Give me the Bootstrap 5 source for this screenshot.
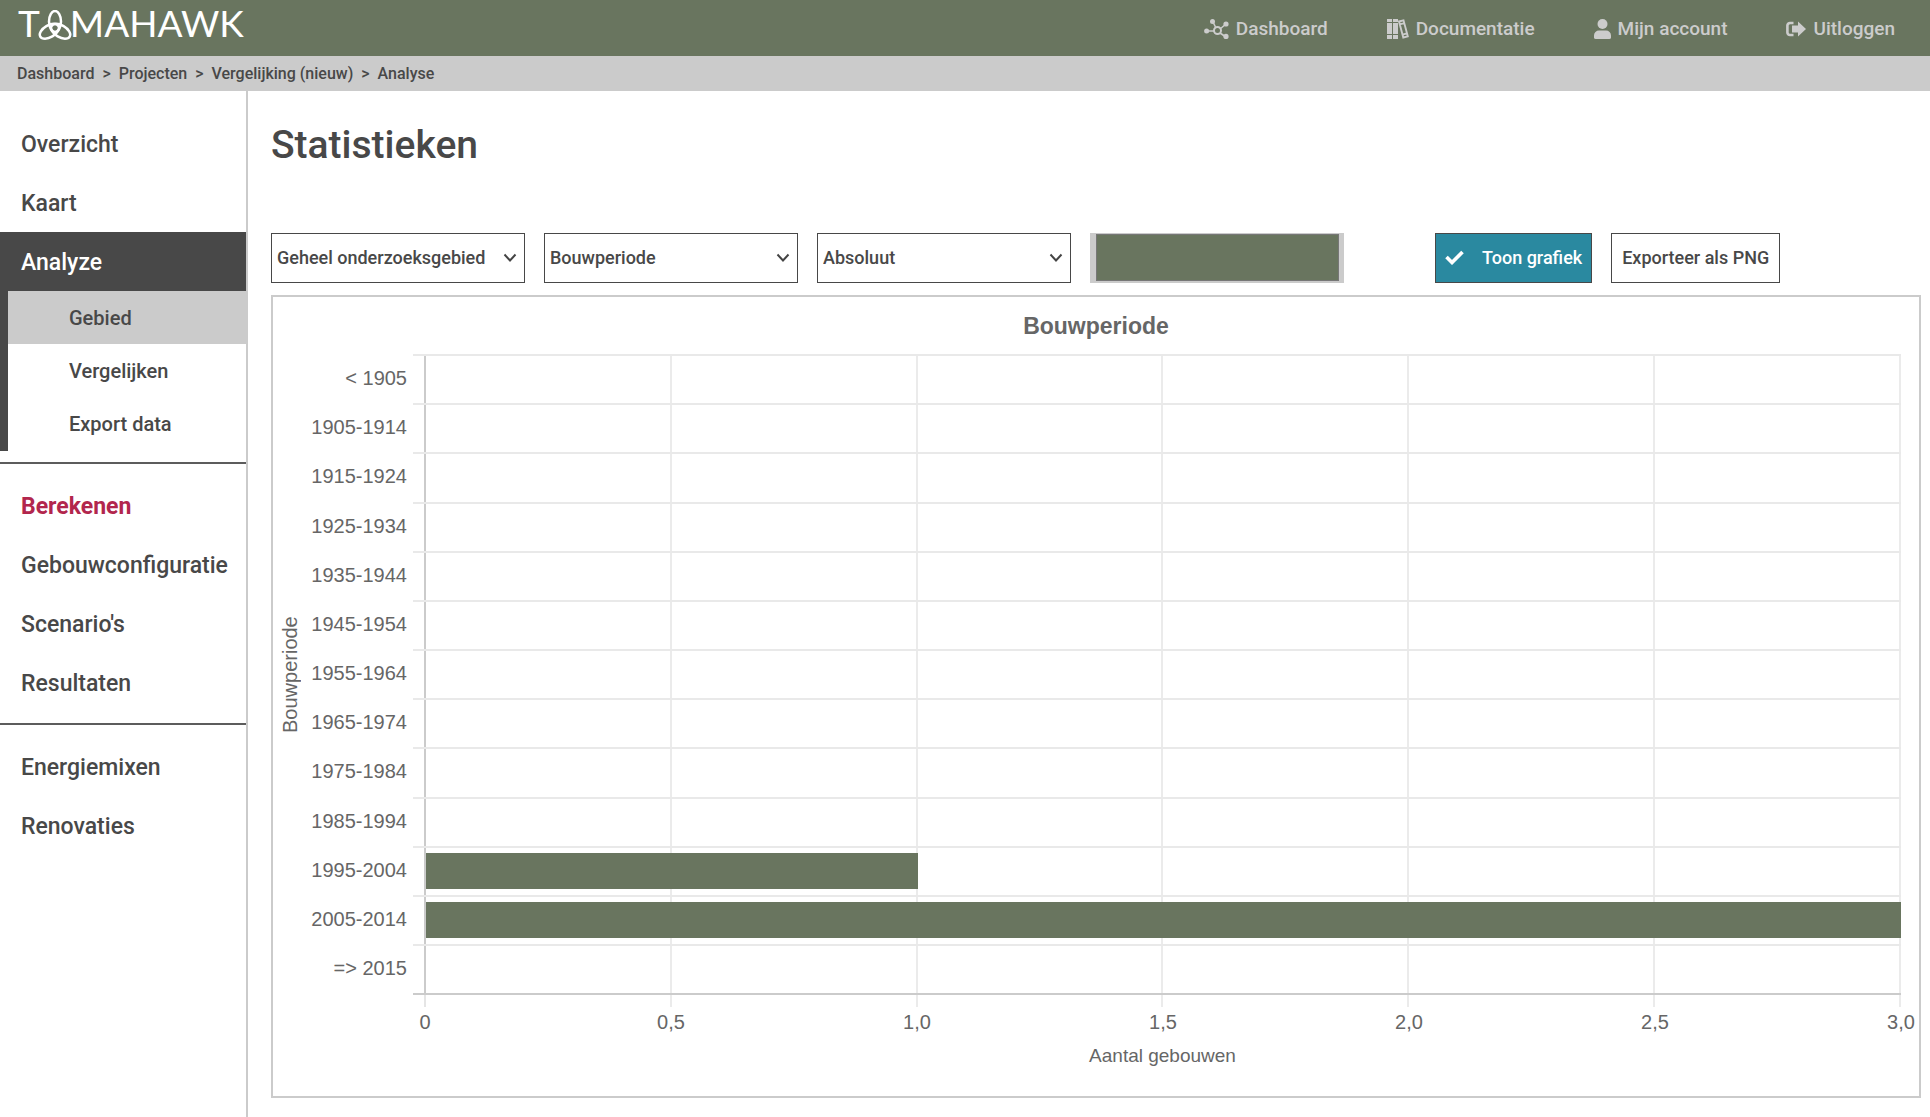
<!DOCTYPE html>
<html lang="nl">
<head>
<meta charset="utf-8">
<meta name="viewport" content="width=device-width, initial-scale=1">
<title>Tomahawk - Statistieken</title>
<link href="https://cdn.jsdelivr.net/npm/bootstrap@5.3.0/dist/css/bootstrap.min.css" rel="stylesheet">
<style>
  :root { --moss: #69755f; --ink: #484848; --line: #cbcbcb; --teal: #2a89a0; }
  body { font-family: Roboto, "Liberation Sans", sans-serif; font-weight: 500; color: var(--ink); }
  a { color: inherit; text-decoration: none; }
  .topbar { background: var(--moss); height: 56px; padding: 0 35px 0 18px; }
  .logo { color: #fff; font: 400 37px/40px Lato, sans-serif; height: 50px; }
  .logo svg { width: 34px; height: 31px; margin: 7px -2px 0 -2px; }
  .topnav { gap: 59px; font-size: 19px; color: #ccc; padding-top: 2px; }
  .topnav a { gap: 7px; }
  .topnav svg { height: 20px; fill: currentColor; }
  .crumbs { --bs-breadcrumb-divider: ">"; --bs-breadcrumb-divider-color: var(--ink); --bs-breadcrumb-item-padding-x: 8px;
    background: #cbcbcb; height: 35px; padding: 0 17px; font-size: 16px; line-height: 35px; }
  .crumbs .active { color: inherit; }
  .side { flex: 0 0 248px; border-right: 2px solid var(--line); padding-top: 23px; }
  .side .nav-link { color: inherit; font-size: 23px; line-height: 57px; padding: 2px 16px 0 21px; }
  .side .picked { background: var(--ink); color: #fff; }
  .side .subnav { border-left: 8px solid var(--ink); padding-bottom: 1px; }
  .side .subnav .nav-link { font-size: 20px; line-height: 52px; padding: 1px 16px 0 61px; }
  .side .chosen { background: #cbcbcb; }
  .side .calc { color: #b2264d; font-weight: 700; }
  .side hr { margin: 11px 0 12px; border-top: 2px solid #5c5c5c; opacity: 1; }
  .content { padding: 30px 9px 19px 23px; }
  .page-title { font-size: 39px; line-height: 48px; font-weight: 500; margin-bottom: 64px; }
  .tools { gap: 12px 19px; margin-bottom: 12px; }
  .tools > * { height: 50px; border-radius: 0; font-size: 18px; font-weight: 500; }
  .tools .form-select, .tools .swatch { width: 254px; }
  .tools .form-select { border: 1px solid var(--ink); color: var(--ink); padding: 0 30px 2px 5px;
    background-image: url("data:image/svg+xml,%3Csvg xmlns='http://www.w3.org/2000/svg' viewBox='0 0 14 10'%3E%3Cpath d='M1.5 1.5 7 7.500l5.500-6' fill='none' stroke='%23444' stroke-width='2'/%3E%3C/svg%3E");
    background-size: 14px 10px; background-position: right 7px center; }
  .swatch { border: 0; padding: 1px 5px 2px 6px; background: #cbcbcb; margin-right: 72px; }
  .swatch::-webkit-color-swatch-wrapper { padding: 0; }
  .swatch::-webkit-color-swatch { border: 1px solid #777; border-radius: 0; }
  .tools .btn { border: 1px solid var(--ink); color: var(--ink); padding: 0 10px 2px; }
  .tools .btn-show { background: var(--teal); color: #fff; padding: 0 9px 2px; }
  .btn-show svg { width: 19px; height: 15px; margin-right: 18px; }
  .chart { --labels: 135px; --stub: 11px; border: 2px solid var(--line); padding: 14px 18px 28px 5px;
    font: 400 20px/24px "Liberation Sans", Arial, sans-serif; color: #666; }
  .chart-name { font-size: 23px; line-height: 30px; font-weight: 700; padding-left: 13px; margin-bottom: 13px; }
  .plot { display: grid; height: 653px; }
  .plot > * { grid-area: 1 / 1; }
  .side-name { writing-mode: vertical-rl; transform: rotate(180deg); justify-self: start; text-align: center; padding-top: 12px; }
  .bands { padding-bottom: 12px; }
  .band { flex: 1 1 0; }
  .band > span { flex: 0 0 var(--labels); padding-right: 6px; text-align: right; line-height: 48px; }
  .track { border-top: 2px solid #e9e9e9; padding: 5px 0 6px calc(var(--stub) + 2px); }
  .band:last-child { flex: 0 0 51px; }
  .band:last-child .track { border-bottom: 2px solid #cbcbcb; }
  .bar { background: var(--moss); height: 100%; }
  .rules { margin-left: calc(var(--labels) + var(--stub)); }
  .rules i { width: 2px; background: rgba(0, 0, 0, .08); }
  .rules i:first-child { background: linear-gradient(#cbcbcb, #cbcbcb) top / 2px calc(100% - 12px) no-repeat, #e5e5e5; }
  .ticks { margin-left: 147px; padding-top: 3px; }
  .ticks span { width: 0; display: flex; justify-content: center; }
  .base-name { font-size: 19px; padding-left: 146px; margin-top: 10px; }
</style>
<script src="https://cdn.jsdelivr.net/npm/bootstrap@5.3.0/dist/js/bootstrap.bundle.min.js"></script>
</head>
<body class="d-flex flex-column min-vh-100">
<header class="topbar d-flex align-items-center justify-content-between">
  <a href="#" class="logo d-flex align-items-start" aria-label="Tomahawk"><span>T</span>
    <svg viewBox="0 0 34 31" fill="none" stroke="#fff" stroke-width="2.500" aria-hidden="true">
      <ellipse cx="17" cy="11.500" rx="6" ry="10.500"/>
      <ellipse cx="17" cy="11.500" rx="6" ry="10.500" transform="rotate(120 17 18)"/>
      <ellipse cx="17" cy="11.500" rx="6" ry="10.500" transform="rotate(240 17 18)"/>
    </svg><span>MAHAWK</span></a>
  <nav class="topnav d-flex">
    <a href="#" class="d-flex align-items-center"><svg width="25" viewBox="0 0 25 20" aria-hidden="true"><g stroke="currentColor" stroke-width="1.600"><path d="M3 12h7M9 3l3 6M22 5l-6 5M16 14l6 4" /></g><circle cx="13.500" cy="11.500" r="3.500" fill="none" stroke="currentColor" stroke-width="2"/><circle cx="2.600" cy="12" r="2.500"/><circle cx="8.500" cy="2.600" r="2.500"/><circle cx="22" cy="5" r="2.600"/><circle cx="22" cy="17.400" r="2.600"/></svg>Dashboard</a>
    <a href="#" class="d-flex align-items-center"><svg width="22" viewBox="0 0 22 20" aria-hidden="true"><path d="M0 0h5v3H0zM0 4h5v11H0zM0 16h5v4H0zM6 0h5v3H6zM6 4h5v11H6zM6 16h5v4H6z"/><path d="m12 2.500 4.500-1.200 4.300 16-4.500 1.200zM12.800 5.300l4.500-1.200M15.500 15.600l4.500-1.200" fill="none" stroke="currentColor" stroke-width="1.900"/></svg>Documentatie</a>
    <a href="#" class="d-flex align-items-center"><svg width="17" viewBox="0 0 17 20" aria-hidden="true"><circle cx="8.500" cy="5" r="5"/><path d="M5 11.500h7a5 5 0 0 1 5 5V18a1.800 1.800 0 0 1-1.800 2H1.800A1.800 1.800 0 0 1 0 18v-1.500a5 5 0 0 1 5-5z"/></svg>Mijn account</a>
    <a href="#" class="d-flex align-items-center"><svg width="20" viewBox="0 0 20 20" aria-hidden="true"><path d="M7.500 4H4a2.600 2.600 0 0 0-2.600 2.600v6.800A2.600 2.600 0 0 0 4 16h3.500" fill="none" stroke="currentColor" stroke-width="2.600"/><path d="M12 2.500 20 10 12 17.500V13.500H6v-7h6z"/></svg>Uitloggen</a>
  </nav>
</header>
<nav aria-label="Kruimelpad">
  <ol class="crumbs breadcrumb mb-0">
    <li class="breadcrumb-item"><a href="#">Dashboard</a></li>
    <li class="breadcrumb-item"><a href="#">Projecten</a></li>
    <li class="breadcrumb-item"><a href="#">Vergelijking (nieuw)</a></li>
    <li class="breadcrumb-item active" aria-current="page">Analyse</li>
  </ol>
</nav>
<div class="d-flex flex-grow-1">
  <nav class="side nav flex-column flex-nowrap">
    <a class="nav-link" href="#">Overzicht</a>
    <a class="nav-link" href="#">Kaart</a>
    <a class="nav-link picked" href="#">Analyze</a>
    <div class="subnav">
      <a class="nav-link chosen" href="#">Gebied</a>
      <a class="nav-link" href="#">Vergelijken</a>
      <a class="nav-link" href="#">Export data</a>
    </div>
    <hr>
    <a class="nav-link calc" href="#">Berekenen</a>
    <a class="nav-link" href="#">Gebouwconfiguratie</a>
    <a class="nav-link" href="#">Scenario's</a>
    <a class="nav-link" href="#">Resultaten</a>
    <hr>
    <a class="nav-link" href="#">Energiemixen</a>
    <a class="nav-link" href="#">Renovaties</a>
  </nav>
  <main class="content flex-grow-1">
    <h1 class="page-title">Statistieken</h1>
    <form class="tools d-flex flex-wrap">
      <select class="form-select" aria-label="Gebied"><option>Geheel onderzoeksgebied</option></select>
      <select class="form-select" aria-label="Kenmerk"><option>Bouwperiode</option></select>
      <select class="form-select" aria-label="Weergave"><option>Absoluut</option></select>
      <input type="color" class="swatch" value="#69755f" aria-label="Kleur">
      <button type="button" class="btn btn-show d-flex align-items-center"><svg viewBox="0 0 19 15" fill="none" stroke="#fff" stroke-width="3.600" aria-hidden="true"><path d="m1.500 7 5.500 5.500L17.500 2"/></svg>Toon grafiek</button>
      <button type="button" class="btn">Exporteer als PNG</button>
    </form>
    <section class="chart">
      <h2 class="chart-name text-center">Bouwperiode</h2>
      <div class="plot">
        <div class="side-name">Bouwperiode</div>
        <div class="rules d-flex justify-content-between"><i></i><i></i><i></i><i></i><i></i><i></i><i></i></div>
        <div class="bands d-flex flex-column">
          <div class="band d-flex"><span>&lt; 1905</span><div class="track flex-grow-1"></div></div>
          <div class="band d-flex"><span>1905-1914</span><div class="track flex-grow-1"></div></div>
          <div class="band d-flex"><span>1915-1924</span><div class="track flex-grow-1"></div></div>
          <div class="band d-flex"><span>1925-1934</span><div class="track flex-grow-1"></div></div>
          <div class="band d-flex"><span>1935-1944</span><div class="track flex-grow-1"></div></div>
          <div class="band d-flex"><span>1945-1954</span><div class="track flex-grow-1"></div></div>
          <div class="band d-flex"><span>1955-1964</span><div class="track flex-grow-1"></div></div>
          <div class="band d-flex"><span>1965-1974</span><div class="track flex-grow-1"></div></div>
          <div class="band d-flex"><span>1975-1984</span><div class="track flex-grow-1"></div></div>
          <div class="band d-flex"><span>1985-1994</span><div class="track flex-grow-1"></div></div>
          <div class="band d-flex"><span>1995-2004</span><div class="track flex-grow-1"><div class="bar" style="width:33.333%"></div></div></div>
          <div class="band d-flex"><span>2005-2014</span><div class="track flex-grow-1"><div class="bar" style="width:100%"></div></div></div>
          <div class="band d-flex"><span>=&gt; 2015</span><div class="track flex-grow-1"></div></div>
        </div>
      </div>
      <div class="ticks d-flex justify-content-between"><span>0</span><span>0,5</span><span>1,0</span><span>1,5</span><span>2,0</span><span>2,5</span><span>3,0</span></div>
      <div class="base-name text-center">Aantal gebouwen</div>
    </section>
  </main>
</div>
</body>
</html>
